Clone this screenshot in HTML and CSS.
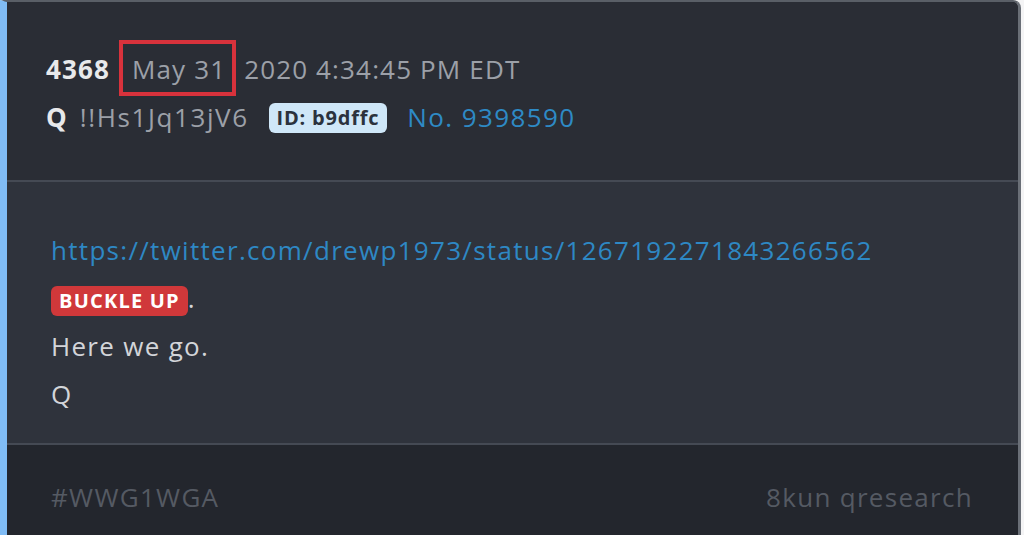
FILE: index.html
```html
<!DOCTYPE html>
<html>
	<head>
		<meta charset="UTF-8">
		<title>4368</title>
		<link rel="stylesheet" href="styles.css">
	</head>
	<body>
		<!--帖子卡片-->
		<div class="post">
			<div class="post-head">
				<div class="line">
					<b class="num">4368</b> <span class="mark">May 31</span> 2020 4:34:45 PM EDT
				</div>
				<div class="line">
					<b class="name">Q</b> <span class="trip">!!Hs1Jq13jV6</span> <span class="uid">ID: b9dffc</span> <a class="no" href="javascript:;">No. 9398590</a>
				</div>
			</div>
			<div class="post-body">
				<div class="line"><a class="link" href="javascript:;">https://twitter.com/drewp1973/status/1267192271843266562</a></div>
				<div class="line"><span class="tag">BUCKLE UP</span>.</div>
				<div class="line">Here we go.</div>
				<div class="line">Q</div>
			</div>
			<div class="post-foot">
				<span>#WWG1WGA</span>
				<span>8kun qresearch</span>
			</div>
		</div>
	</body>
</html>
```
FILE: styles.css
```css
/*去除默认样式*/
*{
	margin: 0;
	padding: 0;
	box-sizing: border-box;
}

body{
	background-color: #f4f4f5;
	font-family: "Open Sans", "Noto Sans", sans-serif;
	height: 535px;
	overflow: hidden;
}

/*卡片*/
.post{
	width: 1021px;
	height: 535px;
	display: flex;
	flex-direction: column;
	border-left: 7px solid #80bcf5;
	border-top: 2px solid #5a5f67;
	border-right: 3px solid #6a6f77;
	border-top-right-radius: 8px;
	background-color: #23262d;
	font-size: 26px;
	letter-spacing: 1.3px;
}

.line{
	line-height: 48px;
	white-space: nowrap;
}

a{
	text-decoration: none;
}

/*头部*/
.post-head{
	height: 178px;
	padding: 42px 0 0 39px;
	background-color: #2a2d35;
	color: #9ca0a8;
	border-top-right-radius: 6px;
	letter-spacing: 1.15px;
}

.num,
.name{
	color: #e8e9eb;
	font-weight: 700;
}

.name{
	margin-right: 4px;
}

.trip{
	letter-spacing: 1.6px;
}

.mark{
	display: inline-block;
	margin: -4px 0 -4px 1px;
	padding: 3px 6px 0 9px;
	border: 4px solid #d8323c;
	line-height: 45px;
}

.uid{
	display: inline-block;
	margin-left: 12px;
	padding: 0 8px;
	line-height: 30px;
	border-radius: 6px;
	background-color: #cfe7f8;
	color: #2b323d;
	font-size: 20px;
	font-weight: 700;
	letter-spacing: 0.8px;
	vertical-align: 2px;
}

.no{
	margin-left: 12px;
	color: #2e8ac5;
	letter-spacing: 1.4px;
}

/*正文*/
.post-body{
	height: 263px;
	padding: 44px 0 0 44px;
	border-top: 2px solid #454a54;
	background-color: #2f333c;
	color: #d3d5d9;
}

.link{
	color: #2e88c4;
}

.tag{
	display: inline-block;
	padding: 0 8px;
	line-height: 30px;
	border-radius: 6px;
	background-color: #d0383a;
	color: #fff;
	font-size: 20px;
	font-weight: 700;
	letter-spacing: 1.2px;
	vertical-align: 0;
}

/*底部*/
.post-foot{
	flex: 1;
	display: flex;
	justify-content: space-between;
	padding: 28px 45px 0 44px;
	border-top: 2px solid #454a54;
	background-color: #23262d;
	color: #555a63;
	line-height: 48px;
}
```
